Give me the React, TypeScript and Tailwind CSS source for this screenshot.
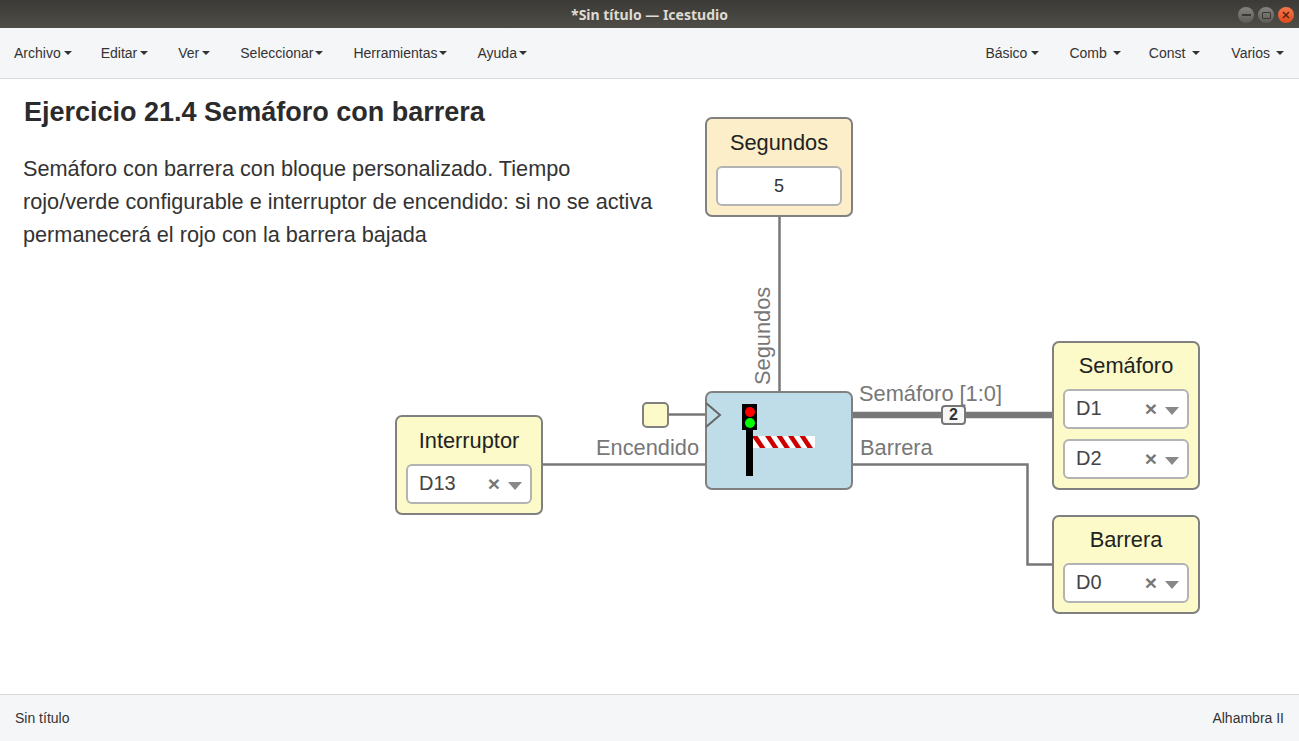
const menuLeft = [
  { label: "Archivo", gap: "mr-[29px]", caretGap: "gap-[3px]" },
  { label: "Editar", gap: "mr-[30px]", caretGap: "gap-[3px]" },
  { label: "Ver", gap: "mr-[30px]", caretGap: "gap-[3px]" },
  { label: "Seleccionar", gap: "mr-[30px]", caretGap: "gap-[2px]" },
  { label: "Herramientas", gap: "mr-[30px]", caretGap: "gap-[2px]" },
  { label: "Ayuda", gap: "", caretGap: "gap-[2px]" },
]

const menuRight = [
  { label: "Básico", gap: "mr-[30px]", caretGap: "gap-[4px]" },
  { label: "Comb", gap: "mr-[28px]", caretGap: "gap-[6px]" },
  { label: "Const", gap: "mr-[31px]", caretGap: "gap-[7px]" },
  { label: "Varios", gap: "", caretGap: "gap-[6px]" },
]

function Caret() {
  return <span className="inline-block w-0 h-0 border-x-[4px] border-x-transparent border-t-[4px] border-t-[#333]" />
}

function MenuItem({ label, gap, caretGap }: { label: string; gap: string; caretGap: string }) {
  return (
    <div className={`flex items-center text-[14px] text-[#333] ${caretGap} ${gap}`}>
      <span>{label}</span>
      <Caret />
    </div>
  )
}

function WindowButtons() {
  return (
    <div className="absolute right-[5px] top-[7px] flex gap-[4px]">
      <div className="w-[16px] h-[16px] rounded-full bg-gradient-to-b from-[#85847e] to-[#5d5c57] flex items-center justify-center">
        <div className="w-[9px] h-[2px] bg-[#3a3935]" />
      </div>
      <div className="w-[16px] h-[16px] rounded-full bg-gradient-to-b from-[#85847e] to-[#5d5c57] flex items-center justify-center">
        <div className="w-[9px] h-[7px] border border-[#3a3935] rounded-[1px]" />
      </div>
      <div className="w-[16px] h-[16px] rounded-full bg-gradient-to-b from-[#f6774a] to-[#dd4a18] flex items-center justify-center">
        <svg width="8" height="8" viewBox="0 0 8 8" stroke="#5a2410" strokeWidth="1.5">
          <path d="M1 1L7 7M7 1L1 7" />
        </svg>
      </div>
    </div>
  )
}

function PinSelect({ value, className }: { value: string; className?: string }) {
  return (
    <div className={`h-[40px] bg-white border-2 border-[#b3b3b3] rounded-[6px] flex items-center pl-[11px] pr-[8px] pb-[2px] text-[20px] text-[#444] ${className ?? ""}`}>
      <span className="flex-1">{value}</span>
      <span className="text-[#777] text-[21px] font-bold leading-none mr-[8px]">×</span>
      <span className="w-0 h-0 mt-[6px] border-x-[7px] border-x-transparent border-t-[8px] border-t-[#888]" />
    </div>
  )
}

function Block({
  title,
  position,
  titleBox = "h-[46px]",
  bg = "bg-[#fbfac8]",
  children,
}: {
  title: string
  position: string
  titleBox?: string
  bg?: string
  children: React.ReactNode
}) {
  return (
    <div className={`absolute w-[148px] ${position} ${bg} border-2 border-[#808080] rounded-[7px] px-[9px]`}>
      <div className={`${titleBox} flex items-center justify-center text-[21.8px] text-[#222]`}>{title}</div>
      {children}
    </div>
  )
}

function WireLabel({ children, className }: { children: React.ReactNode; className: string }) {
  return <div className={`absolute text-[21.8px] leading-none text-[#777] whitespace-nowrap ${className}`}>{children}</div>
}

export default function App() {
  return (
    <div className="h-[741px] w-[1299px] overflow-hidden flex flex-col bg-white font-['Liberation_Sans',Arial,sans-serif]">
      {/* Window title bar */}
      <div className="relative h-[28px] shrink-0 bg-gradient-to-b from-[#3b3a36] to-[#4f4d47] flex items-center justify-center text-[14px] font-bold text-[#dfdbd2] font-['Noto_Sans',sans-serif]">
        *Sin título — Icestudio
        <WindowButtons />
      </div>

      {/* Menu bar */}
      <div className="h-[51px] shrink-0 bg-[#f5f6f8] border-b border-[#d9dadc] flex items-center justify-between pl-[14px] pr-[15px]">
        <div className="flex items-center">
          {menuLeft.map((m) => (
            <MenuItem key={m.label} label={m.label} gap={m.gap} caretGap={m.caretGap} />
          ))}
        </div>
        <div className="flex items-center">
          {menuRight.map((m) => (
            <MenuItem key={m.label} label={m.label} gap={m.gap} caretGap={m.caretGap} />
          ))}
        </div>
      </div>

      {/* Canvas */}
      <div className="relative flex-1 overflow-hidden">
        <div className="absolute left-[23px] top-[16px] w-[660px]">
          <h1 className="ml-[1px] text-[27px] leading-[34px] font-bold text-[#2b2b2b]">Ejercicio 21.4 Semáforo con barrera</h1>
          <p className="mt-[23px] text-[21.7px] leading-[33px] text-[#333]">
            Semáforo con barrera con bloque personalizado. Tiempo
            <br />
            rojo/verde configurable e interruptor de encendido: si no se activa
            <br />
            permanecerá el rojo con la barrera bajada
          </p>
        </div>

        {/* Wires */}
        <svg className="absolute inset-0" width="1299" height="615" fill="none" stroke="#777">
          <path d="M779.5 136V313" strokeWidth="2.5" />
          <path d="M668 335.5H706" strokeWidth="2.5" />
          <path d="M542 385.5H706" strokeWidth="2.5" />
          <path d="M852 336H1053" strokeWidth="6.5" />
          <path d="M852 385.5H1027.5V485.5H1053" strokeWidth="2.5" />
        </svg>

        <WireLabel className="left-[713px] top-[246px] -rotate-90 w-[100px] text-center">Segundos</WireLabel>
        <WireLabel className="left-[596px] top-[358px]">Encendido</WireLabel>
        <WireLabel className="left-[859px] top-[304px]">Semáforo [1:0]</WireLabel>
        <WireLabel className="left-[860px] top-[358px]">Barrera</WireLabel>

        {/* Bus size badge */}
        <div className="absolute left-[941px] top-[326px] w-[25px] h-[20px] bg-[#f7f7f7] border-2 border-[#777] rounded-[4px] flex items-center justify-center text-[16px] font-bold text-[#333] leading-none">
          2
        </div>

        {/* Clock input */}
        <div className="absolute left-[642px] top-[323px] w-[27px] h-[26px] bg-[#fbfac8] border-2 border-[#808080] rounded-[5px]" />

        <Block title="Segundos" position="left-[705px] top-[38px] h-[100px]" titleBox="h-[47px] pt-[1px]" bg="bg-[#fbeec8]">
          <div className="h-[40px] bg-white border-2 border-[#b3b3b3] rounded-[6px] flex items-center justify-center text-[18px] text-[#333]">5</div>
        </Block>

        <Block title="Interruptor" position="left-[395px] top-[336px] h-[100px]" titleBox="h-[47px] pt-[1px]">
          <PinSelect value="D13" />
        </Block>

        <Block title="Semáforo" position="left-[1052px] top-[262px] h-[149px]">
          <PinSelect value="D1" />
          <PinSelect value="D2" className="mt-[10px]" />
        </Block>

        <Block title="Barrera" position="left-[1052px] top-[436px] h-[99px]">
          <PinSelect value="D0" />
        </Block>

        {/* Traffic light block */}
        <div className="absolute left-[705px] top-[312px] w-[148px] h-[99px] bg-[#bfdce9] border-2 border-[#808080] rounded-[7px]">
          <svg className="absolute -left-[2px] -top-[2px]" width="148" height="99">
            <path d="M1 12L15 24L1 36" fill="none" stroke="#666" strokeWidth="2" />
            <rect x="37" y="13" width="15" height="26" fill="#000" />
            <rect x="41" y="39" width="7" height="46" fill="#000" />
            <circle cx="45" cy="21" r="5" fill="#ff0000" />
            <circle cx="45" cy="32" r="5" fill="#00ff00" />
            <rect x="48" y="45" width="62" height="12" fill="#fff" />
            <path d="M48 45h4.5l8 12h-5.5l-7-10zM60 45h5.5l8 12h-5.5zM71.5 45h5.5l8 12h-5.5zM83 45h5.5l8 12h-5.5zM94.5 45h5.5l8 12h-5.5z" fill="#cc0000" />
          </svg>
        </div>
      </div>

      {/* Status bar */}
      <div className="h-[47px] shrink-0 bg-[#f5f6f8] border-t border-[#d9dadc] flex items-center justify-between pl-[15px] pr-[15px] text-[14px] text-[#333]">
        <span>Sin título</span>
        <span>Alhambra II</span>
      </div>
    </div>
  )
}
